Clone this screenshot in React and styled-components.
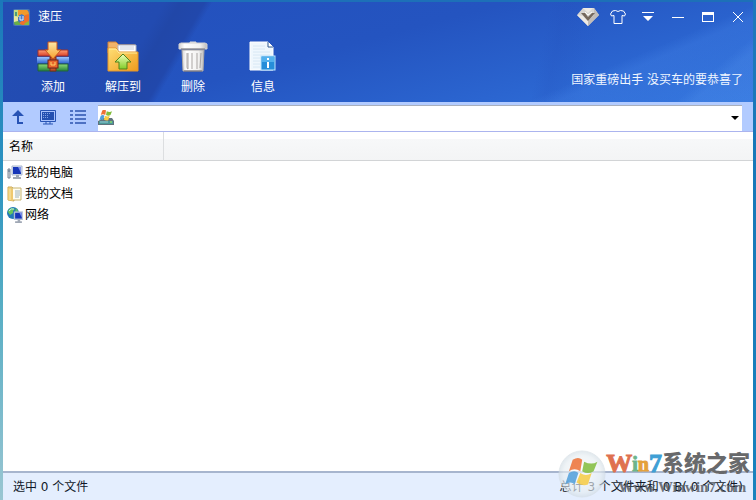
import React from "react";
import styled, { createGlobalStyle } from "styled-components";

const GlobalStyle = createGlobalStyle`
  * { box-sizing: border-box; }
  body { margin: 0; }
  body, button, input, table {
    font-family: "DejaVu Sans", "Noto Sans CJK SC", sans-serif;
    font-size: 12px;
    line-height: 16px;
  }
`;

const Desktop = styled.div`
  position: relative;
  display: flex;
  min-height: 100vh;
  padding: 2px 3px 0;
  background:
    linear-gradient(180deg, #1e78bd 0, #1878b8 30%, #1a83bd 100%) right / 3px 100% no-repeat,
    linear-gradient(180deg, #1b78ba 0, #2c93c0 35%, #55adc4 60%, #9ac6d2 100%) left / 3px 100% no-repeat,
    #1d70b8;
`;

const Window = styled.main`
  display: flex;
  flex: 1;
  flex-direction: column;
  min-width: 0;
  background: #fff;
`;

const Header = styled.header`
  color: #fff;
  background:
    linear-gradient(140deg, transparent 91%, #5d9cf333 93%),
    linear-gradient(157deg, transparent 77%, #4887ea44 80%, #3f82ea22 100%),
    linear-gradient(102deg, transparent 71%, #2450bc33 73%, #3769d900 78%),
    linear-gradient(120deg, #234db3 0, #224bb1 20%, #2147a8 22%, #2148ac 25%, transparent 26%),
    linear-gradient(165deg, #2350bd 0, #2454c0 45%, #2b65d0 75%, #3274dc 100%);
`;

const TitleBar = styled.div`
  display: flex;
  align-items: center;
  justify-content: space-between;
  height: 30px;
  padding: 0 0 0 10px;
`;

const Brand = styled.h1`
  display: flex;
  align-items: center;
  gap: 8px;
  margin: 0;
  font-size: 12px;
  font-weight: 400;
`;

const WindowControls = styled.div`
  display: flex;
`;

const PlainButton = styled.button`
  display: flex;
  align-items: center;
  justify-content: center;
  padding: 0;
  border: 0;
  color: inherit;
  background: none;
`;

const ControlButton = styled(PlainButton)`
  width: 30px;
  height: 30px;
`;

const HeaderBody = styled.div`
  display: flex;
  align-items: flex-start;
  justify-content: space-between;
  height: 70px;
  padding: 8px 10px 0 16px;
`;

const Toolbar = styled.nav`
  display: flex;
  gap: 2px;
`;

const ToolButton = styled(PlainButton)`
  flex-direction: column;
  gap: 5px;
  width: 68px;
`;

const Promo = styled.a`
  margin-top: 32px;
  color: #f0f6ff;
  text-decoration: none;
  white-space: nowrap;
`;

const AddressBar = styled.div`
  display: flex;
  align-items: center;
  height: 30px;
  padding-right: 11px;
  border-bottom: 1px solid #abb4ee;
  background: #b2cbff;
`;

const NavButton = styled(PlainButton)`
  width: 30px;
  height: 28px;
`;

const AddressField = styled.label`
  display: flex;
  flex: 1;
  align-items: center;
  height: 26px;
  margin: 2px 0 0 5px;
  border-top: 1px solid #a9b0bd;
  background: #fff;
`;

const AddressInput = styled.input`
  flex: 1;
  min-width: 0;
  height: 24px;
  padding: 0 4px;
  border: 0;
  outline: 0;
  background: none;
`;

const DropButton = styled(PlainButton)`
  width: 14px;
  height: 24px;
`;

const FileTable = styled.table`
  width: 100%;
  border-collapse: separate;
  border-spacing: 0;
`;

const ColumnHead = styled.th`
  width: ${(p) => (p.$named ? "161px" : "auto")};
  height: 29px;
  padding: 2px 6px 0;
  border-right: ${(p) => (p.$named ? "1px solid #dcdee0" : "0")};
  border-bottom: 1px solid #d2d4d6;
  font-weight: 400;
  text-align: left;
  background: linear-gradient(#fff 0, #fff 25%, #f7f8f9 26%, #f3f4f5 100%);
`;

const FileCell = styled.td`
  height: 21px;
  padding: 2px 4px 0;
`;

const FileName = styled.span`
  display: flex;
  align-items: center;
  gap: 2px;
  white-space: nowrap;
`;

const FileArea = styled.section`
  flex: 1;
`;

const StatusBar = styled.footer`
  display: flex;
  align-items: center;
  justify-content: space-between;
  height: 29px;
  padding: 0 10px;
  border-top: 2px solid #a7b5ce;
  color: #101828;
  background: #e4eefe;
`;

const Watermark = styled.div`
  position: absolute;
  right: 6px;
  bottom: 0;
  display: flex;
  align-items: flex-start;
  height: 50px;
  pointer-events: none;
`;

const MarkText = styled.div`
  display: flex;
  flex-direction: column;
  font-family: "Liberation Serif", "Noto Sans CJK SC", serif;
  font-weight: 900;
  white-space: nowrap;
`;

const MarkTitle = styled.span`
  display: flex;
  align-items: center;
  height: 28px;
  font-size: 22px;
  line-height: 28px;
  color: #68696b;
`;

const MarkLetter = styled.span`
  font-size: ${(p) => (p.$large ? "26px" : "20px")};
  color: ${(p) => p.$color};
  -webkit-text-stroke: 1px ${(p) => p.$color};
`;

const MarkSite = styled.span`
  padding-left: 12px;
  font-size: 15px;
  line-height: 18px;
  color: #4e535bcc;
`;

const Svg = ({ w, h = w, children }) => (
  <svg width={w} height={h} viewBox={`0 0 ${w} ${h}`} aria-hidden="true">{children}</svg>
);

const FlagPanes = () => (
  <>
    <path d="M3 2q3-2 5 0L7 8Q4 6 1 8z" fill="#ee7136" />
    <path d="M9 3q4 2 7 0l-2 5q-3 2-6 0z" fill="#82bd3c" />
    <path d="M1 9q3-2 5 0l-2 6q-2-2-5 0z" fill="#519fdb" />
    <path d="M7 9q3 2 6 0l-2 6q-3 1-6-1z" fill="#f7cc43" />
  </>
);

const AppLogo = () => (
  <Svg w={17}>
    <rect x="0" y="0" width="17" height="17" rx="2" fill="#4a76b4" />
    <path d="M1 1h5v7H1z" fill="#bfdb85" />
    <path d="M5 1h9q2 1 2 5l-5 1-2-2-4 2z" fill="#f09a2c" />
    <path d="M1 7l4 1v6H1z" fill="#e9e7a0" />
    <path d="M2 3h2v4H2z" fill="#4c9d78" />
    <path d="M12 6l4-1v7q-1 4-6 4l-5-1 5-4z" fill="#ef702b" />
    <path d="M1 13l4-1 3 4H3q-2 0-2-3z" fill="#67af48" />
    <path d="M12 14l4-2v4h-5z" fill="#8cb53e" />
    <path d="M6 6h5v6H6z" fill="#477dc9" />
    <path d="M7 7v4h3V7" fill="none" stroke="#e2edff" />
  </Svg>
);

const ArchiveIcon = () => (
  <Svg w={34}>
    <defs>
      <linearGradient id="addArrow" x2="0" y2="1"><stop stopColor="#ffe9a8" /><stop offset="1" stopColor="#f6a02c" /></linearGradient>
      <linearGradient id="redBook" x2="0" y2="1"><stop stopColor="#ff9d73" /><stop offset="1" stopColor="#d8402b" /></linearGradient>
      <linearGradient id="blueBook" x2="0" y2="1"><stop stopColor="#9cc4ff" /><stop offset="1" stopColor="#346ad2" /></linearGradient>
      <linearGradient id="greenBook" x2="0" y2="1"><stop stopColor="#8edb77" /><stop offset="1" stopColor="#24823b" /></linearGradient>
    </defs>
    <path d="M2 10h30v6H2z" fill="url(#redBook)" stroke="#9b3030" />
    <path d="M1 17h32v6H1z" fill="url(#blueBook)" />
    <path d="M2 24h30v7H2z" fill="url(#greenBook)" stroke="#226340" />
    <path d="M14 17h6v14h-6z" fill="#bd5427" stroke="#7a2b1b" />
    <path d="M12 2h9v8h4l-8 9-8-9h3z" fill="url(#addArrow)" stroke="#c8521d" />
    <rect x="12" y="20" width="10" height="8" fill="#e9672d" stroke="#6a211b" />
    <path d="M15 22v3h4v-3" fill="none" stroke="#ffd469" />
  </Svg>
);

const ExtractIcon = () => (
  <Svg w={34}>
    <defs>
      <linearGradient id="folder" x2="1" y2="1"><stop stopColor="#ffdf76" /><stop offset="1" stopColor="#ed9b1d" /></linearGradient>
      <linearGradient id="upArrow" x2="0" y2="1"><stop stopColor="#f2ffba" /><stop offset="1" stopColor="#80cc28" /></linearGradient>
    </defs>
    <path d="M2 2h8l3 3h16v8H2z" fill="#f1b36a" stroke="#ce8238" />
    <path d="M12 5h18v8H12z" fill="#fff" stroke="#aeb6c5" />
    <path d="M14 7h14M14 9h14" stroke="#c8cfdb" />
    <path d="M2 8h8l3 4h19v19H2z" fill="url(#folder)" stroke="#e4942b" />
    <path d="M3 9h7l3 4h18" fill="none" stroke="#ffef9e" />
    <path d="M17 14l8 8h-4v7h-8v-7H9z" fill="url(#upArrow)" stroke="#52831d" />
  </Svg>
);

const TrashIcon = () => (
  <Svg w={34}>
    <defs>
      <linearGradient id="trash"><stop stopColor="#d5d2d2" /><stop offset=".2" stopColor="#fff" /><stop offset=".75" stopColor="#f2f1f0" /><stop offset="1" stopColor="#bbb" /></linearGradient>
    </defs>
    <path d="M14 3V2h6v1" fill="#eee" stroke="#ddd" />
    <path d="M5 3h24l2 1v5H3V4z" fill="url(#trash)" stroke="#d2d0d0" />
    <path d="M6 10h22l-1 21H7z" fill="url(#trash)" stroke="#aaa7a7" />
    <path d="M5 9h24" stroke="#77747b" />
    <path d="M11 13v14q0 2 1 2V13M16 13v16M21 13v16M25 13l-1 15" fill="none" stroke="#aaa5a3" />
    <path d="M8 31h18" stroke="#706d74" />
  </Svg>
);

const InfoIcon = () => (
  <Svg w={34}>
    <path d="M4 2h18l5 5v23H4z" fill="#eff7fd" stroke="#fff" />
    <path d="M7 6h12M7 9h12M7 12h17M7 15h17M7 18h8M7 21h7M7 24h7M7 27h7" stroke="#d8e8f4" />
    <path d="M22 2v5h5" fill="#fff" stroke="#2d568e" />
    <rect x="15" y="16" width="14" height="14" fill="#258ed9" stroke="#bce6ff" />
    <path d="M16 17h12v5H16z" fill="#52b1ed" />
    <path d="M21 18h2v2h-2zm0 4h2v6h-2z" fill="#fff" />
  </Svg>
);

const GemIcon = () => (
  <Svg w={22} h={20}>
    <path d="M6 1h11l5 7-11 11L0 8z" fill="#d7d5d2" />
    <path d="M6 1h10l-5 5zM0 8l6 1 5 5v5z" fill="#eeeae4" />
    <path d="M17 1l5 7-11 11v-5l6-6z" fill="#c1bcb8" />
    <path d="M4 6h4l3 4 4-4h3l-7 8z" fill="#75685d" />
    <path d="M8 5l3 3 4-3" stroke="#fffdf8" fill="none" />
  </Svg>
);

const ShirtIcon = () => (
  <Svg w={16} h={14}>
    <path d="M5.5.5q2.5 2 5 0l3 .5 2 3-1 2-2.500-.5v8h-8v-8L1.500 6l-1-2 2-3z" fill="none" stroke="#fff" strokeLinejoin="round" />
  </Svg>
);

const MenuIcon = () => <Svg w={14} h={12}><path d="M1 1h12v1H1zM2 5h10l-5 5z" fill="#fff" /></Svg>;
const MinIcon = () => <Svg w={12}><path d="M0 6h12" stroke="#fff" shapeRendering="crispEdges" /></Svg>;
const MaxIcon = () => <Svg w={12} h={10}><path d="M0 0h12v10H0zM1 3v6h10V3z" fill="#fff" fillRule="evenodd" /></Svg>;
const CloseIcon = () => <Svg w={12}><path d="M1 1l10 10M11 1L1 11" stroke="#fff" /></Svg>;

const UpIcon = () => <Svg w={16}><path d="M8 1l6 6H9v6h4v2H7V7H2z" fill="#2753b5" /></Svg>;

const ScreenIcon = () => (
  <Svg w={16}>
    <rect x="0" y="1" width="16" height="12" rx="1" fill="#2854b4" />
    <path d="M1 2h14v10H1z" fill="#a9c2fb" />
    <rect x="2" y="3" width="12" height="8" fill="#2450b0" />
    <path d="M3 4.500h7M3 6.500h6M3 8.500h5" stroke="#82a1e4" strokeDasharray="1 1" />
    <path d="M6 13v2M10 13v2M3 15h10" stroke="#2854b4" />
  </Svg>
);

const ListIcon = () => (
  <Svg w={16}>
    <path d="M0 2h3M0 6h3M0 10h3M0 14h3M5 2h11M5 6h11M5 10h11M5 14h11" stroke="#2c54b0" strokeWidth="1.5" />
  </Svg>
);

const DriveIcon = () => (
  <Svg w={16}>
    <path d="M2 10l2-2h10l2 3v4H0v-4z" fill="#61727d" />
    <path d="M1 11h14v3H1z" fill="#4c9b9a" />
    <path d="M2 12h8" stroke="#9ac8d4" />
    <path d="M12 12h2" stroke="#b3f04e" />
    <g transform="translate(2 -1) scale(.75)"><FlagPanes /></g>
  </Svg>
);

const Monitor = () => (
  <>
    <path d="M5 1h10v9H5z" fill="#dbe3f1" stroke="#a9b6cf" />
    <path d="M6 2h8v7H6z" fill="#1736b8" />
    <path d="M11 2h3v6z" fill="#8193ea" />
    <path d="M9 10h3v2h2v2H6v-2h3z" fill="#a0a8b5" />
  </>
);

const ComputerIcon = () => (
  <Svg w={16}><Monitor /><path d="M1 4h2v9H1z" fill="#dce1e9" stroke="#7b8490" /><path d="M1 6h2" stroke="#526b88" /></Svg>
);

const DocumentsIcon = () => (
  <Svg w={16}>
    <path d="M1 1h4l2 2v12l-6-1z" fill="#f4d687" stroke="#cda957" />
    <path d="M5 2h9v12H5z" fill="#fffdf1" stroke="#c8b46f" />
    <path d="M8 5h5M8 7h5M8 9h5M8 11h4" stroke="#9fb4bc" />
    <path d="M1 2l5 1v12l-5-1z" fill="#efc96e" />
    <path d="M3 3v11" stroke="#f9e9af" />
  </Svg>
);

const NetworkIcon = () => (
  <Svg w={16}>
    <circle cx="6" cy="6" r="6" fill="#2279b9" />
    <path d="M2 2l3-1 3 1-2 2 0 2-3 2-2-3zM9 1l2 3-2 3-1-2z" fill="#65c55e" />
    <path d="M2 4q2-3 5-2" stroke="#c1ecf1" fill="none" />
    <g transform="translate(3 4) scale(.85)"><Monitor /></g>
  </Svg>
);

const WatermarkLogo = () => (
  <Svg w={48}>
    <defs><radialGradient id="orb"><stop stopColor="#fff" /><stop offset=".8" stopColor="#e7eef2" /><stop offset="1" stopColor="#d2dde5" /></radialGradient></defs>
    <circle cx="24" cy="24" r="23" fill="url(#orb)" stroke="#d4dde3" opacity=".65" />
    <g transform="translate(9 6) scale(1.9)" opacity=".85"><FlagPanes /></g>
  </Svg>
);

const tools = [
  ["添加", ArchiveIcon],
  ["解压到", ExtractIcon],
  ["删除", TrashIcon],
  ["信息", InfoIcon],
];

const controls = [
  ["会员", GemIcon],
  ["皮肤", ShirtIcon],
  ["菜单", MenuIcon],
  ["最小化", MinIcon],
  ["最大化", MaxIcon],
  ["关闭", CloseIcon],
];

const navigation = [
  ["向上", UpIcon],
  ["电脑", ScreenIcon],
  ["列表", ListIcon],
];

const files = [
  ["我的电脑", ComputerIcon],
  ["我的文档", DocumentsIcon],
  ["网络", NetworkIcon],
];

export default function App() {
  return (
    <>
      <GlobalStyle />
      <Desktop>
        <Window>
          <Header>
            <TitleBar>
              <Brand><AppLogo />速压</Brand>
              <WindowControls>
                {controls.map(([label, Icon]) => (
                  <ControlButton key={label} type="button" aria-label={label}><Icon /></ControlButton>
                ))}
              </WindowControls>
            </TitleBar>
            <HeaderBody>
              <Toolbar>
                {tools.map(([label, Icon]) => (
                  <ToolButton key={label} type="button"><Icon />{label}</ToolButton>
                ))}
              </Toolbar>
              <Promo href="#">国家重磅出手 没买车的要恭喜了</Promo>
            </HeaderBody>
          </Header>
          <AddressBar>
            {navigation.map(([label, Icon]) => (
              <NavButton key={label} type="button" aria-label={label}><Icon /></NavButton>
            ))}
            <AddressField>
              <DriveIcon />
              <AddressInput type="text" aria-label="地址" />
              <DropButton type="button" aria-label="展开地址">
                <Svg w={8} h={4}><path d="M0 0h8L4 4z" fill="#000" /></Svg>
              </DropButton>
            </AddressField>
          </AddressBar>
          <FileArea>
            <FileTable>
              <thead>
                <tr><ColumnHead $named scope="col">名称</ColumnHead><ColumnHead as="td" /></tr>
              </thead>
              <tbody>
                {files.map(([name, Icon]) => (
                  <tr key={name}>
                    <FileCell colSpan={2}><FileName><Icon />{name}</FileName></FileCell>
                  </tr>
                ))}
              </tbody>
            </FileTable>
          </FileArea>
          <StatusBar>
            <span>选中 0 个文件</span>
            <span>总计 3 个文件夹和 0 B( 0 个文件)</span>
          </StatusBar>
        </Window>
        <Watermark>
          <WatermarkLogo />
          <MarkText>
            <MarkTitle>
              <MarkLetter $large $color="#df7150">W</MarkLetter>
              <MarkLetter $color="#6cb58c">i</MarkLetter>
              <MarkLetter $color="#e4a13c">n</MarkLetter>
              <MarkLetter $large $color="#3f9fd5">7</MarkLetter>
              系统之家
            </MarkTitle>
            <MarkSite>Www.Winwin7.com</MarkSite>
          </MarkText>
        </Watermark>
      </Desktop>
    </>
  );
}
